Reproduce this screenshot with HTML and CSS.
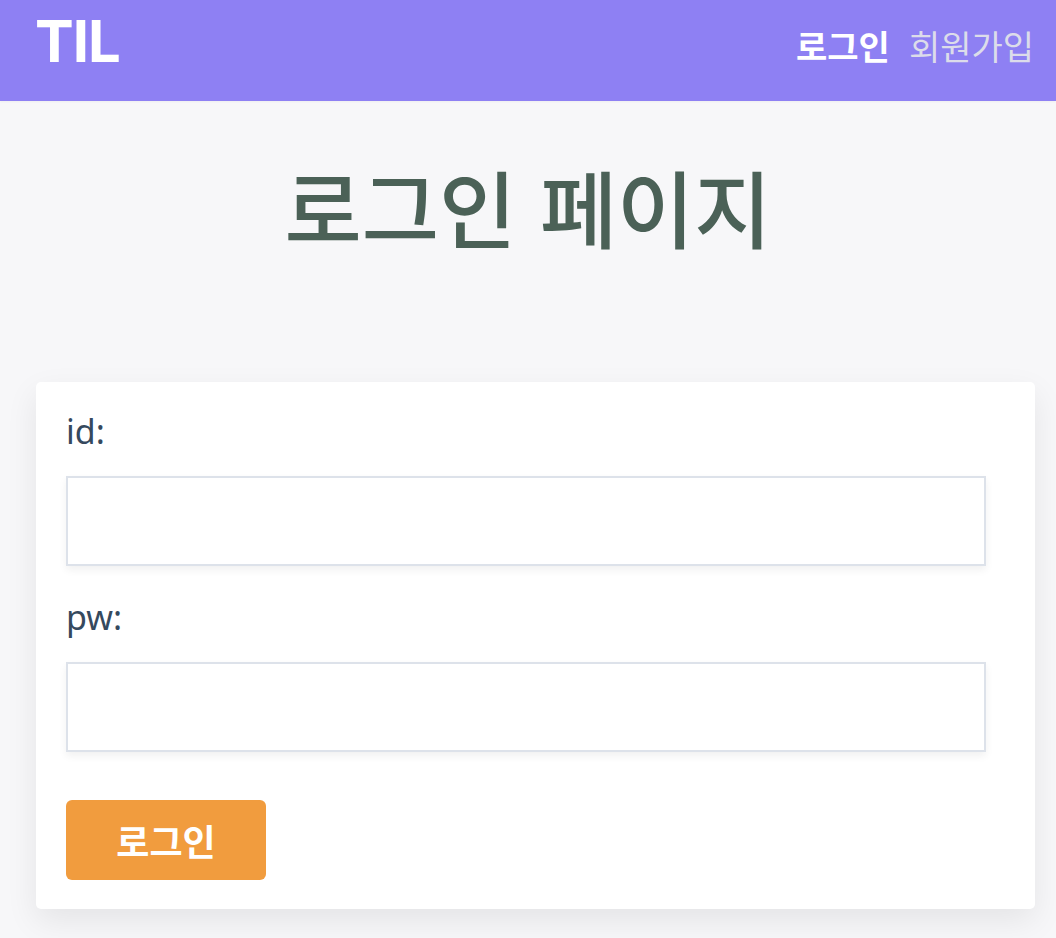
FILE: index.html
```html
<!DOCTYPE html>
<html lang="ko">
<head>
<meta charset="utf-8">
<title>TIL 로그인</title>
<link rel="stylesheet" href="styles.css">
</head>
<body>
<header class="header">
  <a class="logo" href="#">TIL</a>
  <nav class="nav">
    <a class="nav-link active" href="#">로그인</a>
    <a class="nav-link" href="#">회원가입</a>
  </nav>
</header>
<main class="main">
  <h1 class="title">로그인 페이지</h1>
  <form class="card">
    <label class="label" for="uid">id:</label>
    <input class="input" id="uid" type="text">
    <label class="label" for="upw">pw:</label>
    <input class="input" id="upw" type="password">
    <button class="btn" type="button">로그인</button>
  </form>
</main>
</body>
</html>
```
FILE: styles.css
```css
* { box-sizing: border-box; }
html, body {
  margin: 0;
  padding: 0;
  background: #f7f7f9;
  font-family: "Noto Sans", "Noto Sans CJK KR", sans-serif;
  height: 100%;
}
.header {
  height: 101px;
  background: #8e80f3;
  display: flex;
  align-items: center;
  justify-content: space-between;
  padding: 0 22px 0 35px;
  box-shadow: 0 1px 2px rgba(0,0,0,0.04);
}
.logo {
  color: #fff;
  text-decoration: none;
  font-family: Inter, "Noto Sans", sans-serif;
  font-weight: 700;
  font-size: 58px;
  letter-spacing: -1px;
  line-height: 1;
  margin-top: -19px;
}
.nav {
  display: flex;
  gap: 19px;
  margin-top: -11px;
}
.nav-link {
  color: #dcdcea;
  text-decoration: none;
  font-family: "Noto Sans CJK KR", sans-serif;
  font-size: 34px;
  font-weight: 400;
}
.nav-link.active {
  color: #fff;
  font-weight: 700;
}
.main {
  padding-top: 46px;
}
.title {
  margin: 0;
  text-align: center;
  font-family: "Noto Sans CJK KR", sans-serif;
  font-size: 84px;
  font-weight: 500;
  color: #4b6157;
  line-height: 1.4;
}
.card {
  margin: 117px 21px 0 36px;
  background: #fff;
  border-radius: 5px;
  padding: 27px 30px 29px 30px;
  display: flex;
  flex-direction: column;
  align-items: flex-start;
  box-shadow: 0 12px 32px rgba(0,0,0,0.08);
}
.label {
  font-family: "Noto Sans", "Noto Sans CJK KR", sans-serif;
  font-size: 34px;
  color: #35495e;
  line-height: 1.3;
}
.input {
  width: 98%;
  height: 90px;
  margin: 23px 0 29px;
  border: 2px solid #dde2ea;
  background: #fff;
  box-shadow: 0 4px 8px rgba(0,0,0,0.06);
  font-size: 30px;
}
.btn {
  margin-top: 19px;
  width: 200px;
  height: 80px;
  background: #f19c3e;
  border: none;
  border-radius: 6px;
  color: #fff;
  font-family: "Noto Sans CJK KR", sans-serif;
  font-size: 36px;
  font-weight: 700;
  padding: 0;
}
```
